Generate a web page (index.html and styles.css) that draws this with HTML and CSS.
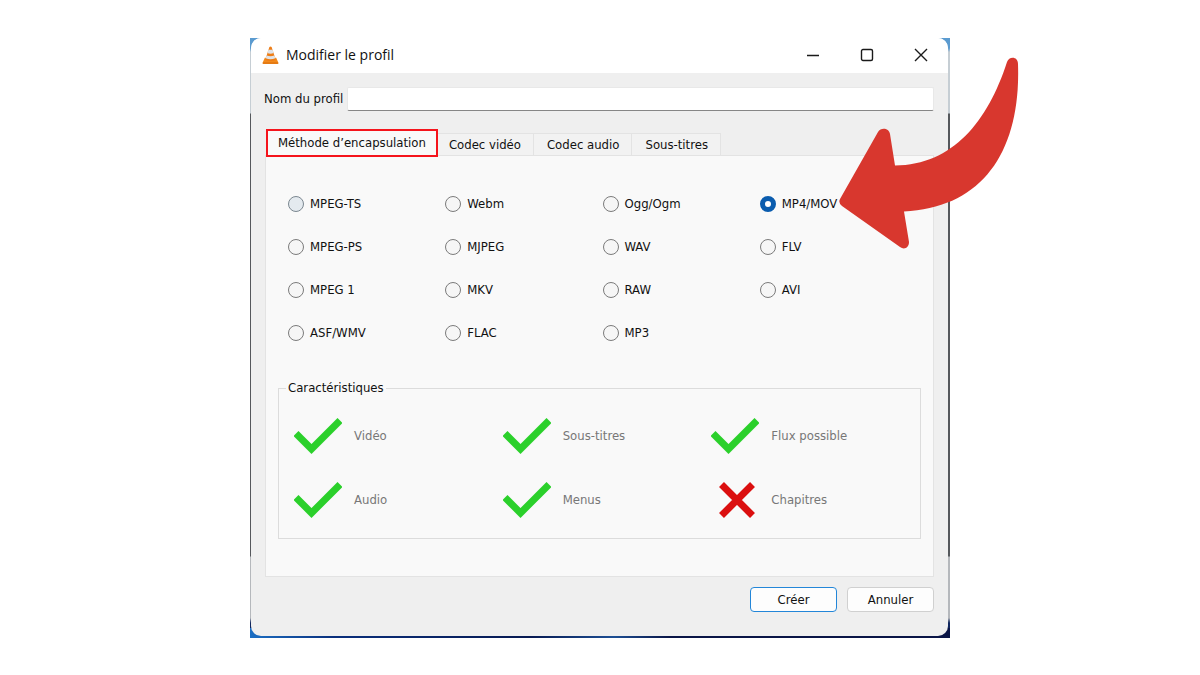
FILE: index.html
```html
<!DOCTYPE html>
<html lang="fr">
<head>
<meta charset="utf-8">
<title>Modifier le profil</title>
<link rel="stylesheet" href="styles.css">
</head>
<body>
<svg class="defs" aria-hidden="true">
  <symbol id="check" viewBox="0 0 48 36"><path d="M2 15.500 17.500 31 46 2.500" fill="none" stroke="#2bd02b" stroke-width="7"/></symbol>
  <symbol id="cross" viewBox="0 0 48 36"><path d="M10.500 2.500 41.500 33.500M41.500 2.500 10.500 33.500" fill="none" stroke="#db0f0f" stroke-width="7"/></symbol>
</svg>
<main class="backdrop">
  <form class="window">
    <header class="titlebar">
      <svg class="cone" viewBox="0 0 18 20" aria-hidden="true">
        <path d="M3 13h12l2.500 5.500q0 1-1 1h-15q-1 0-1-1z" fill="#f28a1c"/>
        <path d="M7.800 1.500q1.200-1 2.400 0L14.500 15q-5.500 2.500-11 0z" fill="#ee7d16"/>
        <path d="M6.800 4.500h4.400l1.100 3.500q-3.300 1.300-6.600 0zM4.900 10.500q4.100 1.500 8.200 0l1 3q-5.100 2.200-10.200 0z" fill="#dfe3e8"/>
        <path d="M1 18.500h16" stroke="#d96b0b"/>
      </svg>
      <h1 class="title">Modifier le profil</h1>
      <div class="controls">
        <button type="button" class="control" aria-label="Réduire"><svg viewBox="0 0 14 14"><path d="M1 7.500h12"/></svg></button>
        <button type="button" class="control" aria-label="Agrandir"><svg viewBox="0 0 14 14"><rect x="1.500" y="1.500" width="11" height="11" rx="1.500"/></svg></button>
        <button type="button" class="control" aria-label="Fermer"><svg viewBox="0 0 14 14"><path d="m1 1 12 12M13 1 1 13"/></svg></button>
      </div>
    </header>
    <div class="content">
      <div class="name-row">
        <label for="name">Nom du profil</label>
        <input class="name-input" id="name" type="text">
      </div>
      <div class="tabs" role="tablist">
        <button type="button" class="tab tab-active" role="tab" aria-selected="true">Méthode d’encapsulation</button>
        <button type="button" class="tab" role="tab">Codec vidéo</button>
        <button type="button" class="tab" role="tab">Codec audio</button>
        <button type="button" class="tab" role="tab">Sous-titres</button>
      </div>
      <section class="panel" role="tabpanel">
        <div class="formats">
          <label class="format"><input class="radio radio-hover" type="radio" name="mux">MPEG-TS</label>
          <label class="format"><input class="radio" type="radio" name="mux">Webm</label>
          <label class="format"><input class="radio" type="radio" name="mux">Ogg/Ogm</label>
          <label class="format"><input class="radio" type="radio" name="mux" checked>MP4/MOV</label>
          <label class="format"><input class="radio" type="radio" name="mux">MPEG-PS</label>
          <label class="format"><input class="radio" type="radio" name="mux">MJPEG</label>
          <label class="format"><input class="radio" type="radio" name="mux">WAV</label>
          <label class="format"><input class="radio" type="radio" name="mux">FLV</label>
          <label class="format"><input class="radio" type="radio" name="mux">MPEG 1</label>
          <label class="format"><input class="radio" type="radio" name="mux">MKV</label>
          <label class="format"><input class="radio" type="radio" name="mux">RAW</label>
          <label class="format"><input class="radio" type="radio" name="mux">AVI</label>
          <label class="format"><input class="radio" type="radio" name="mux">ASF/WMV</label>
          <label class="format"><input class="radio" type="radio" name="mux">FLAC</label>
          <label class="format"><input class="radio" type="radio" name="mux">MP3</label>
        </div>
        <fieldset class="features">
          <legend>Caractéristiques</legend>
          <div class="feature-grid">
            <div class="feature"><svg class="mark"><use href="#check"/></svg>Vidéo</div>
            <div class="feature"><svg class="mark"><use href="#check"/></svg>Sous-titres</div>
            <div class="feature"><svg class="mark"><use href="#check"/></svg>Flux possible</div>
            <div class="feature"><svg class="mark"><use href="#check"/></svg>Audio</div>
            <div class="feature"><svg class="mark"><use href="#check"/></svg>Menus</div>
            <div class="feature"><svg class="mark"><use href="#cross"/></svg>Chapitres</div>
          </div>
        </fieldset>
      </section>
      <footer class="actions">
        <button type="submit" class="action action-primary">Créer</button>
        <button type="button" class="action">Annuler</button>
      </footer>
    </div>
  </form>
  <svg class="arrow" viewBox="838 56 182 194" aria-hidden="true">
    <path d="M1007 62C1009 56 1018 56 1018 64C1021 151 983 208 904 211.500L909 242C909 248 904 250 900 247L842 206Q838 203 840 199L878 132C881 127 889 128 890 134L895 165.500C953 165 988 121 1007 62Z" fill="#d8372e"/>
  </svg>
</main>
</body>
</html>
```
FILE: styles.css
```css
* { box-sizing: border-box; }

body {
  margin: 0;
  padding: 38px 16px;
  background: #fff;
  color: #111;
  font: 13px/16px "DejaVu Sans Condensed", "DejaVu Sans", sans-serif;
}

button, input { font: inherit; color: inherit; }

.defs { position: absolute; width: 0; height: 0; }

.backdrop {
  position: relative;
  max-width: 700px;
  margin: 0 auto;
  padding: 0 2px 2px 1px;
  background:
    linear-gradient(90deg, #1c6fc4, #0a2f7c 12%, #081a52 40%, #1d4f94 52%, #0a1546 60%) bottom / 100% 10px no-repeat,
    linear-gradient(#5b9bd0 0 10px, #c6ced4 14px 75px, #55585c 76px 518px, #b5b8bc 519px 580px, #10265e 585px);
}

.window {
  background: #efefef;
  border-radius: 10px;
  overflow: hidden;
}

.titlebar {
  display: flex;
  align-items: flex-start;
  gap: 7px;
  height: 35px;
  padding: 7px 0 0 11px;
  background: #fff;
}

.cone { width: 17px; height: 20px; }

.title {
  flex: 1;
  margin: 0;
  font: 14px/20px "Open Sans", "Noto Sans", sans-serif;
}

.controls { display: flex; }

.control {
  display: grid;
  place-items: center;
  width: 54px;
  height: 20px;
  padding: 0;
  border: 0;
  background: none;
}

.control svg {
  width: 14px;
  height: 14px;
  fill: none;
  stroke: #1a1a1a;
  stroke-width: 1.4;
}

.content { padding: 14px 14px 24px 13px; }

.name-row {
  display: flex;
  align-items: center;
  gap: 4px;
}

.name-input {
  flex: 1;
  min-width: 0;
  height: 24px;
  border: 1px solid #e8e8e8;
  border-bottom-color: #868686;
  border-radius: 2px;
  background: #fff;
}

.tabs {
  display: flex;
  align-items: flex-end;
  margin-top: 18px;
  padding-left: 2px;
}

.tab {
  height: 22px;
  padding: 0 12px 0 13px;
  border: 1px solid #e3e3e3;
  border-left: 0;
  border-bottom: 0;
  background: #f2f2f2;
  white-space: nowrap;
}

.tab-active {
  position: relative;
  height: 28px;
  margin: 0 -2px -2px 0;
  padding: 0 10px;
  border: 2px solid #f5141c;
  background: #f9f9f9;
}

.panel {
  margin-left: 1px;
  padding: 37px 12px 37px;
  border: 1px solid #e3e3e3;
  background: #f9f9f9;
}

.formats {
  display: grid;
  grid-template-columns: repeat(4, 1fr);
  row-gap: 21px;
  padding: 0 4px 0 10px;
}

.format {
  display: flex;
  align-items: center;
  gap: 6px;
  height: 22px;
}

.radio {
  appearance: none;
  width: 16px;
  height: 16px;
  margin: 0;
  border: 1px solid #7b7b7b;
  border-radius: 50%;
  background: #f6f6f6;
}

.radio-hover { border-color: #7b8790; background: #e4eaef; }

.radio:checked { border: 5px solid #0a5cae; background: #fff; }

.features {
  min-width: 0;
  margin: 36px 0 0;
  padding: 0 0 18px 15px;
  border: 1px solid #dcdcdc;
}

.features legend {
  margin-left: -8px;
  padding: 0 2px;
}

.feature-grid {
  display: grid;
  grid-template-columns: repeat(3, 1fr);
  row-gap: 24px;
  padding-top: 20px;
}

.feature {
  display: flex;
  align-items: center;
  gap: 12px;
  height: 40px;
  color: #777;
}

.mark { width: 48px; height: 36px; }

.actions {
  display: flex;
  justify-content: flex-end;
  gap: 10px;
  margin-top: 10px;
}

.action {
  width: 87px;
  height: 25px;
  border: 1px solid #d0d0d0;
  border-radius: 4px;
  background: #fdfdfd;
}

.action-primary { border: 1px solid #2386d8; }

.arrow {
  position: absolute;
  top: 18px;
  right: -70px;
  width: 182px;
  height: 194px;
  pointer-events: none;
}
```
